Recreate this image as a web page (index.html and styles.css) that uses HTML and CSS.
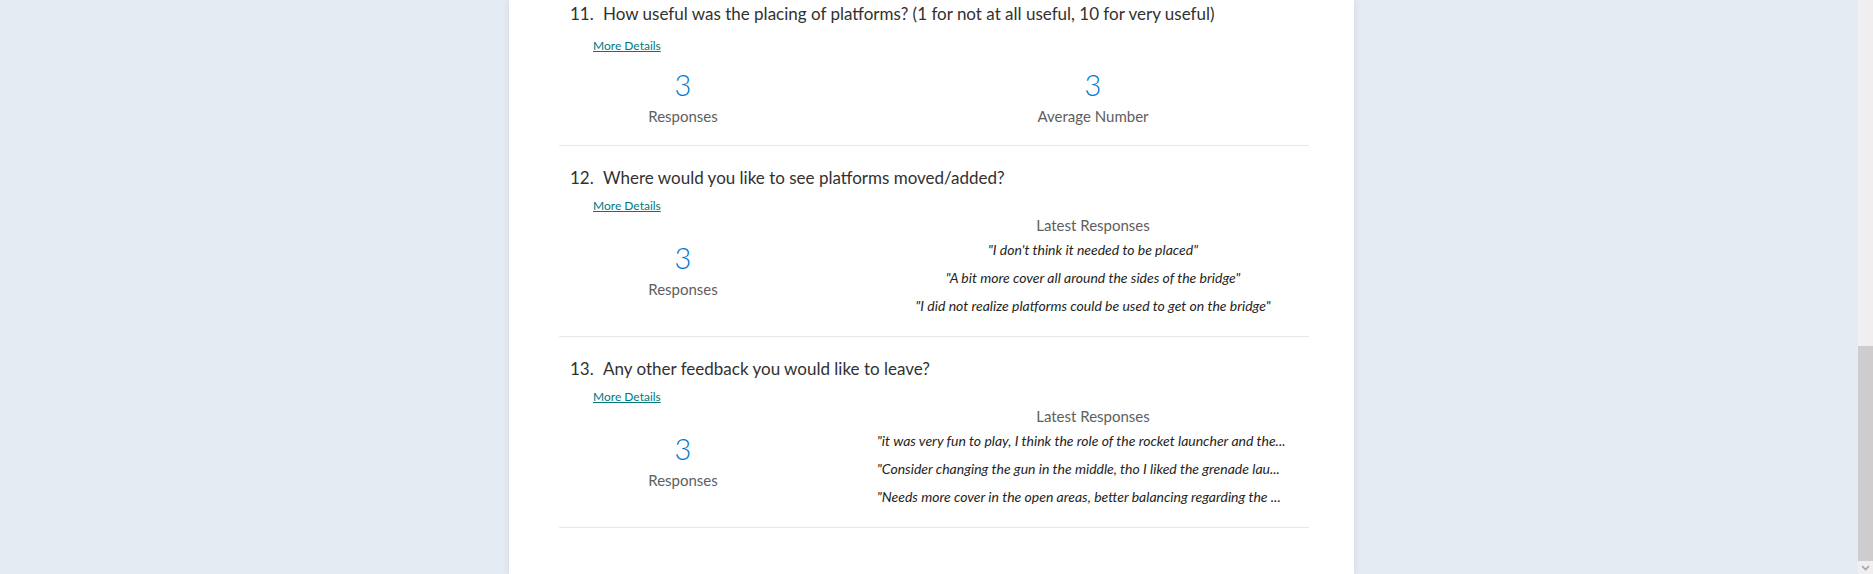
FILE: index.html
```html
<!DOCTYPE html>
<html lang="en">
<head>
<meta charset="utf-8">
<title>Form results</title>
<link rel="stylesheet" href="styles.css">
</head>
<body>
<div class="page">
  <main class="canvas">
    <section class="card">
      <article class="question q-first">
        <h2 class="q-title"><span class="q-num">11.</span><span class="q-text">How useful was the placing of platforms? (1 for not at all useful, 10 for very useful)</span></h2>
        <a class="more more-first" href="#">More Details</a>
        <div class="q-body stats-row">
          <div class="stat">
            <div class="stat-num">3</div>
            <div class="stat-label">Responses</div>
          </div>
          <div class="stat">
            <div class="stat-num">3</div>
            <div class="stat-label">Average Number</div>
          </div>
        </div>
      </article>

      <article class="question">
        <h2 class="q-title"><span class="q-num">12.</span><span class="q-text">Where would you like to see platforms moved/added?</span></h2>
        <a class="more" href="#">More Details</a>
        <div class="q-body">
          <div class="stat stat-side">
            <div class="stat-num">3</div>
            <div class="stat-label">Responses</div>
          </div>
          <div class="latest">
            <div class="latest-head">Latest Responses</div>
            <div class="quote">"I don't think it needed to be placed"</div>
            <div class="quote">"A bit more cover all around the sides of the bridge"</div>
            <div class="quote">"I did not realize platforms could be used to get on the bridge"</div>
          </div>
        </div>
      </article>

      <article class="question">
        <h2 class="q-title"><span class="q-num">13.</span><span class="q-text">Any other feedback you would like to leave?</span></h2>
        <a class="more" href="#">More Details</a>
        <div class="q-body">
          <div class="stat stat-side">
            <div class="stat-num">3</div>
            <div class="stat-label">Responses</div>
          </div>
          <div class="latest">
            <div class="latest-head">Latest Responses</div>
            <div class="quote clip">"it was very fun to play, I think the role of the rocket launcher and the...</div>
            <div class="quote clip">"Consider changing the gun in the middle, tho I liked the grenade lau...</div>
            <div class="quote clip">"Needs more cover in the open areas, better balancing regarding the ...</div>
          </div>
        </div>
      </article>
    </section>
  </main>
  <div class="scrollbar" aria-hidden="true">
    <div class="sb-track"></div>
    <div class="sb-thumb"></div>
    <div class="sb-btn">
      <svg width="9" height="6" viewBox="0 0 9 6"><path d="M1 1 L4.5 4.5 L8 1" fill="none" stroke="#a3a3a3" stroke-width="1.6"/></svg>
    </div>
  </div>
</div>
</body>
</html>
```

FILE: styles.css
```css
html, body {
  margin: 0;
  padding: 0;
  height: 100%;
  overflow: hidden;
}

body {
  font-family: "Lato", "Open Sans", "Liberation Sans", sans-serif;
  color: #323130;
}

.page {
  display: flex;
  height: 100vh;
}

.canvas {
  flex: 1;
  background: #e4ebf3;
  padding-left: 509px;
  overflow: hidden;
}

.card {
  width: 845px;
  height: 100%;
  box-sizing: border-box;
  background: #ffffff;
  box-shadow: 0 0 7px rgba(0, 0, 0, 0.09);
  padding: 0 45px 0 50px;
}

.question {
  display: flex;
  flex-direction: column;
  align-items: flex-start;
  padding: 20px 0 16px;
  border-bottom: 1px solid #e9e8e7;
}

.q-first {
  padding-top: 2px;
  padding-bottom: 16px;
}

.q-title {
  margin: 0;
  padding-left: 11px;
  font-size: 17px;
  line-height: 24px;
  font-weight: 400;
  color: #323130;
  display: flex;
}

.q-num {
  width: 33px;
}

.more {
  margin: 8px 0 0 34px;
  font-size: 12px;
  line-height: 16px;
  color: #03787c;
  text-decoration: underline;
}

.more-first {
  margin-top: 12px;
}

.q-body {
  align-self: stretch;
  display: grid;
  grid-template-columns: 248px 1fr;
  column-gap: 70px;
  align-items: center;
}

.stats-row {
  padding-top: 12px;
  padding-bottom: 1px;
}

.stat {
  display: flex;
  flex-direction: column;
  align-items: center;
}

.stat-side {
  padding-top: 5px;
}

.stat-num {
  font-size: 29px;
  line-height: 38px;
  font-weight: 300;
  color: #0078d4;
}

.stat-label {
  font-size: 15px;
  line-height: 24px;
  color: #605e5c;
}

.latest {
  display: flex;
  flex-direction: column;
  min-width: 0;
}

.latest-head {
  text-align: center;
  font-size: 15px;
  line-height: 22px;
  color: #605e5c;
}

.quote {
  text-align: center;
  font-style: italic;
  font-size: 14px;
  line-height: 20px;
  padding: 4px 0;
  color: #252423;
  white-space: nowrap;
  overflow: hidden;
  text-overflow: ellipsis;
}

.quote.clip {
  text-align: left;
}

.scrollbar {
  width: 15px;
  display: flex;
  flex-direction: column;
  background: #efefef;
}

.sb-track {
  flex: 1;
}

.sb-thumb {
  height: 215px;
  background: #cdcdcd;
}

.sb-btn {
  height: 13px;
  display: flex;
  align-items: center;
  justify-content: center;
}
```
